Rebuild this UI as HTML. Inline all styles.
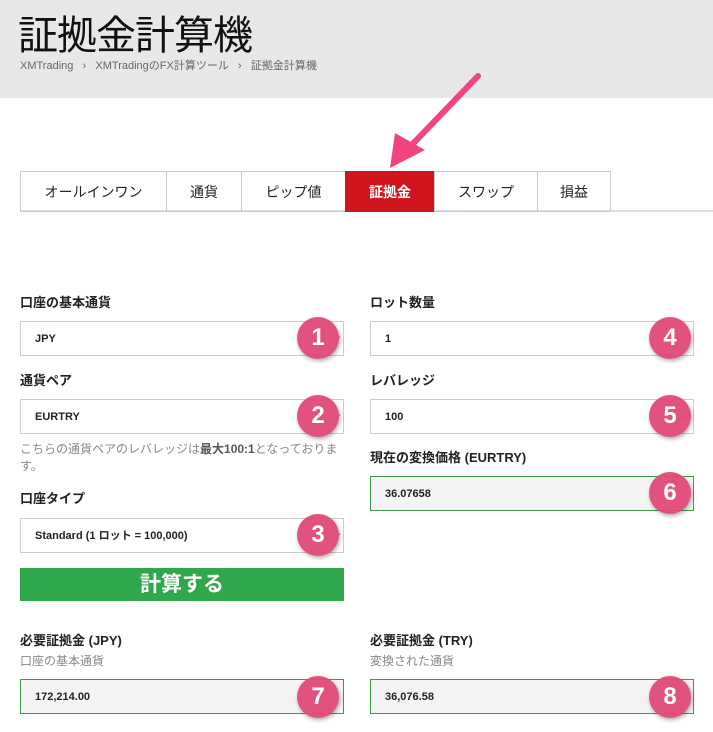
<!DOCTYPE html>
<html><head><meta charset="utf-8"><style>
*{margin:0;padding:0;box-sizing:border-box}
body{width:713px;height:732px;background:#fff;position:relative;overflow:hidden;font-family:"Liberation Sans","Noto Sans CJK JP",sans-serif;color:#222}
.a{position:absolute}
.hdr{left:0;top:0;width:713px;height:98px;background:#e8e8e8}
.title{left:18px;top:12px;font-size:40px;color:#111;letter-spacing:-1px;line-height:48px}
.bc{left:20px;top:59px;font-size:11px;color:#666;line-height:14px}
.tabs{left:20px;top:171px;height:41px;display:flex}
.tab{height:41px;border:1px solid #ccc;border-right:none;display:flex;align-items:center;justify-content:center;font-size:14px;color:#222}
.tab.on{background:#d1151e;color:#fff;font-weight:bold;border-color:#d1151e}
.line{left:20px;top:210px;width:693px;height:2px;background:#ddd}
.lbl{font-size:13px;font-weight:bold;line-height:16px}
.sub{font-size:12px;color:#888;line-height:16px}
.in{width:324px;height:35px;border:1px solid #ccc;background:#fff;font-size:11px;font-weight:bold;padding-left:14px;line-height:35px}
.in.g{border-color:#3a9a4a;background:#f4f4f4}
.chev{position:absolute;right:4px;top:12px;width:6px;height:6px;border-right:1.5px solid #777;border-bottom:1.5px solid #777;transform:rotate(45deg)}
.c{width:42px;height:42px;border-radius:50%;background:#e04a78;box-shadow:1px 2px 4px rgba(0,0,0,.35);color:#fff;font-size:24px;font-weight:bold;text-align:center;line-height:42px;opacity:.95}
.btn{left:20px;top:568px;width:324px;height:33px;background:#2ea84a;color:#fff;font-size:21px;font-weight:bold;text-align:center;line-height:33px}
</style></head><body>
<div class="a hdr"></div>
<div class="a title">証拠金計算機</div>
<div class="a bc">XMTrading &nbsp;&nbsp;›&nbsp;&nbsp; XMTradingのFX計算ツール &nbsp;&nbsp;›&nbsp;&nbsp; 証拠金計算機</div>
<div class="a line"></div>
<div class="a tabs">
<div class="tab" style="width:146px">オールインワン</div>
<div class="tab" style="width:75px">通貨</div>
<div class="tab" style="width:104px">ピップ値</div>
<div class="tab on" style="width:89px">証拠金</div>
<div class="tab" style="width:103px">スワップ</div>
<div class="tab" style="width:74px;border-right:1px solid #ccc">損益</div>
</div>
<svg class="a" style="left:0;top:0" width="713" height="200"><line x1="478" y1="76" x2="405" y2="152" stroke="#f2457c" stroke-width="6" stroke-linecap="round"/><polygon points="390,168 395,133 425,150" fill="#f2457c"/></svg>

<div class="a lbl" style="left:20px;top:295px">口座の基本通貨</div>
<div class="a in" style="left:20px;top:321px">JPY<span class="chev"></span></div>
<div class="a lbl" style="left:20px;top:373px">通貨ペア</div>
<div class="a in" style="left:20px;top:399px">EURTRY<span class="chev"></span></div>
<div class="a sub" style="left:20px;top:441px;width:335px;line-height:17px;font-size:12px">こちらの通貨ペアのレバレッジは<b style="color:#555">最大100:1</b>となっております。</div>
<div class="a lbl" style="left:20px;top:491px">口座タイプ</div>
<div class="a in" style="left:20px;top:518px">Standard (1 ロット = 100,000)<span class="chev"></span></div>
<div class="a btn">計算する</div>
<div class="a lbl" style="left:20px;top:633px">必要証拠金 (JPY)</div>
<div class="a sub" style="left:20px;top:653px">口座の基本通貨</div>
<div class="a in g" style="left:20px;top:679px">172,214.00</div>

<div class="a lbl" style="left:370px;top:295px">ロット数量</div>
<div class="a in" style="left:370px;top:321px">1</div>
<div class="a lbl" style="left:370px;top:373px">レバレッジ</div>
<div class="a in" style="left:370px;top:399px">100<span class="chev"></span></div>
<div class="a lbl" style="left:370px;top:450px">現在の変換価格 (EURTRY)</div>
<div class="a in g" style="left:370px;top:476px">36.07658</div>
<div class="a lbl" style="left:370px;top:633px">必要証拠金 (TRY)</div>
<div class="a sub" style="left:370px;top:653px">変換された通貨</div>
<div class="a in g" style="left:370px;top:679px">36,076.58</div>

<div class="a c" style="left:297px;top:317px">1</div>
<div class="a c" style="left:297px;top:395px">2</div>
<div class="a c" style="left:297px;top:514px">3</div>
<div class="a c" style="left:649px;top:317px">4</div>
<div class="a c" style="left:649px;top:395px">5</div>
<div class="a c" style="left:649px;top:472px">6</div>
<div class="a c" style="left:297px;top:676px">7</div>
<div class="a c" style="left:649px;top:676px">8</div>
</body></html>
